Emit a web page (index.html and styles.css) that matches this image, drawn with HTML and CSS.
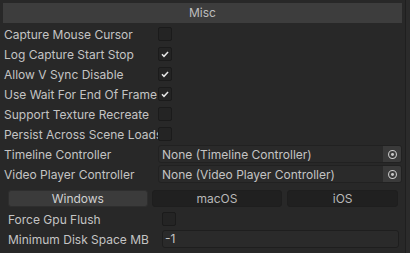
FILE: index.html
```html
<!DOCTYPE html>
<html>
<head>
<meta charset="utf-8">
<link rel="stylesheet" href="styles.css">
</head>
<body>
<div class="window">
  <div class="content">
    <div class="header">Misc</div>
    <div class="row"><div class="label">Capture Mouse Cursor</div><div class="check"></div></div>
    <div class="row"><div class="label">Log Capture Start Stop</div><div class="check on"><svg viewBox="0 0 13 13"><path d="M3.2 6.8 L5.4 9 L9.8 4.2"/></svg></div></div>
    <div class="row"><div class="label">Allow V Sync Disable</div><div class="check on"><svg viewBox="0 0 13 13"><path d="M3.2 6.8 L5.4 9 L9.8 4.2"/></svg></div></div>
    <div class="row"><div class="label">Use Wait For End Of Frame</div><div class="check on"><svg viewBox="0 0 13 13"><path d="M3.2 6.8 L5.4 9 L9.8 4.2"/></svg></div></div>
    <div class="row"><div class="label">Support Texture Recreate</div><div class="check"></div></div>
    <div class="row"><div class="label">Persist Across Scene Loads</div><div class="check"></div></div>
    <div class="row"><div class="label">Timeline Controller</div>
      <div class="objfield"><span class="objtext">None (Timeline Controller)</span><span class="picker"><svg viewBox="0 0 12 12"><circle cx="6" cy="6" r="4.3"/><circle class="dot" cx="6" cy="6" r="1.6"/></svg></span></div>
    </div>
    <div class="row"><div class="label">Video Player Controller</div>
      <div class="objfield"><span class="objtext">None (Video Player Controller)</span><span class="picker"><svg viewBox="0 0 12 12"><circle cx="6" cy="6" r="4.3"/><circle class="dot" cx="6" cy="6" r="1.6"/></svg></span></div>
    </div>
    <div class="platform">
      <div class="tabs">
        <div class="tab sel t1">Windows</div>
        <div class="tab t2">macOS</div>
        <div class="tab t3">iOS</div>
      </div>
      <div class="row sub"><div class="label">Force Gpu Flush</div><div class="check"></div></div>
      <div class="row sub"><div class="label">Minimum Disk Space MB</div><div class="textfield">-1</div></div>
    </div>
  </div>
  <div class="scroll"></div>
</div>
</body>
</html>
```
FILE: styles.css
```css
html, body {
  margin: 0;
  padding: 0;
  background: #282828;
}
body {
  font-family: Inter, "Noto Sans", sans-serif;
  font-size: 12px;
  color: #c4c4c4;
  width: 410px;
  height: 253px;
  overflow: hidden;
}
.window {
  display: flex;
  height: 253px;
}
.content {
  width: 399px;
  padding: 3px 2px 0 3px;
}
.scroll {
  width: 5px;
  margin-left: 1px;
  border-left: 1px solid #1f1f1f;
  background: #2b2b2b;
}
.header {
  height: 20px;
  line-height: 20px;
  background: #3d3d3d;
  text-align: center;
  color: #bdbdbd;
  margin-bottom: 1px;
}
.row {
  display: flex;
  align-items: center;
  height: 20px;
}
.label {
  width: 154px;
  padding-left: 1px;
  flex: none;
  white-space: nowrap;
  overflow: hidden;
}
.check {
  width: 12px;
  height: 12px;
  border: 1px solid #1b1b1b;
  background: #242424;
  border-radius: 2px;
  display: flex;
}
.check svg {
  width: 12px;
  height: 12px;
}
.check path {
  fill: none;
  stroke: #e6e6e6;
  stroke-width: 1.6;
}
.objfield {
  flex: 1;
  height: 16px;
  display: flex;
  align-items: center;
  border: 1px solid #212121;
  background: #2a2a2a;
  border-radius: 3px;
  overflow: hidden;
}
.objtext {
  flex: 1;
  padding-left: 3px;
  white-space: nowrap;
}
.picker {
  width: 18px;
  height: 16px;
  background: #3a3a3a;
  display: flex;
  align-items: center;
  justify-content: center;
}
.picker svg {
  width: 11px;
  height: 11px;
}
.picker circle {
  fill: none;
  stroke: #c8c8c8;
  stroke-width: 1.2;
}
.picker circle.dot {
  fill: #c8c8c8;
  stroke: none;
}
.platform {
  padding: 6px 4px 0 4px;
}
.tabs {
  display: flex;
  height: 17px;
  margin-bottom: 2px;
  padding-left: 1px;
}
.tab {
  height: 15px;
  line-height: 15px;
  text-align: center;
  border: 1px solid #1e1e1e;
  border-radius: 3px;
  background: #202020;
  color: #b8b8b8;
}
.tab.sel {
  background: #3b3b3b;
  border-color: #2e2e2e;
  color: #d0d0d0;
}
.t1 { width: 138px; }
.t2 { width: 129px; margin-left: 4px; }
.t3 { width: 109px; margin-left: 5px; }
.row.sub .label {
  width: 154px;
  padding-left: 1px;
}
.textfield {
  flex: 1;
  height: 16px;
  line-height: 16px;
  border: 1px solid #1e1e1e;
  background: #2a2a2a;
  border-radius: 3px;
  padding-left: 2px;
  margin-right: -1px;
}
```
